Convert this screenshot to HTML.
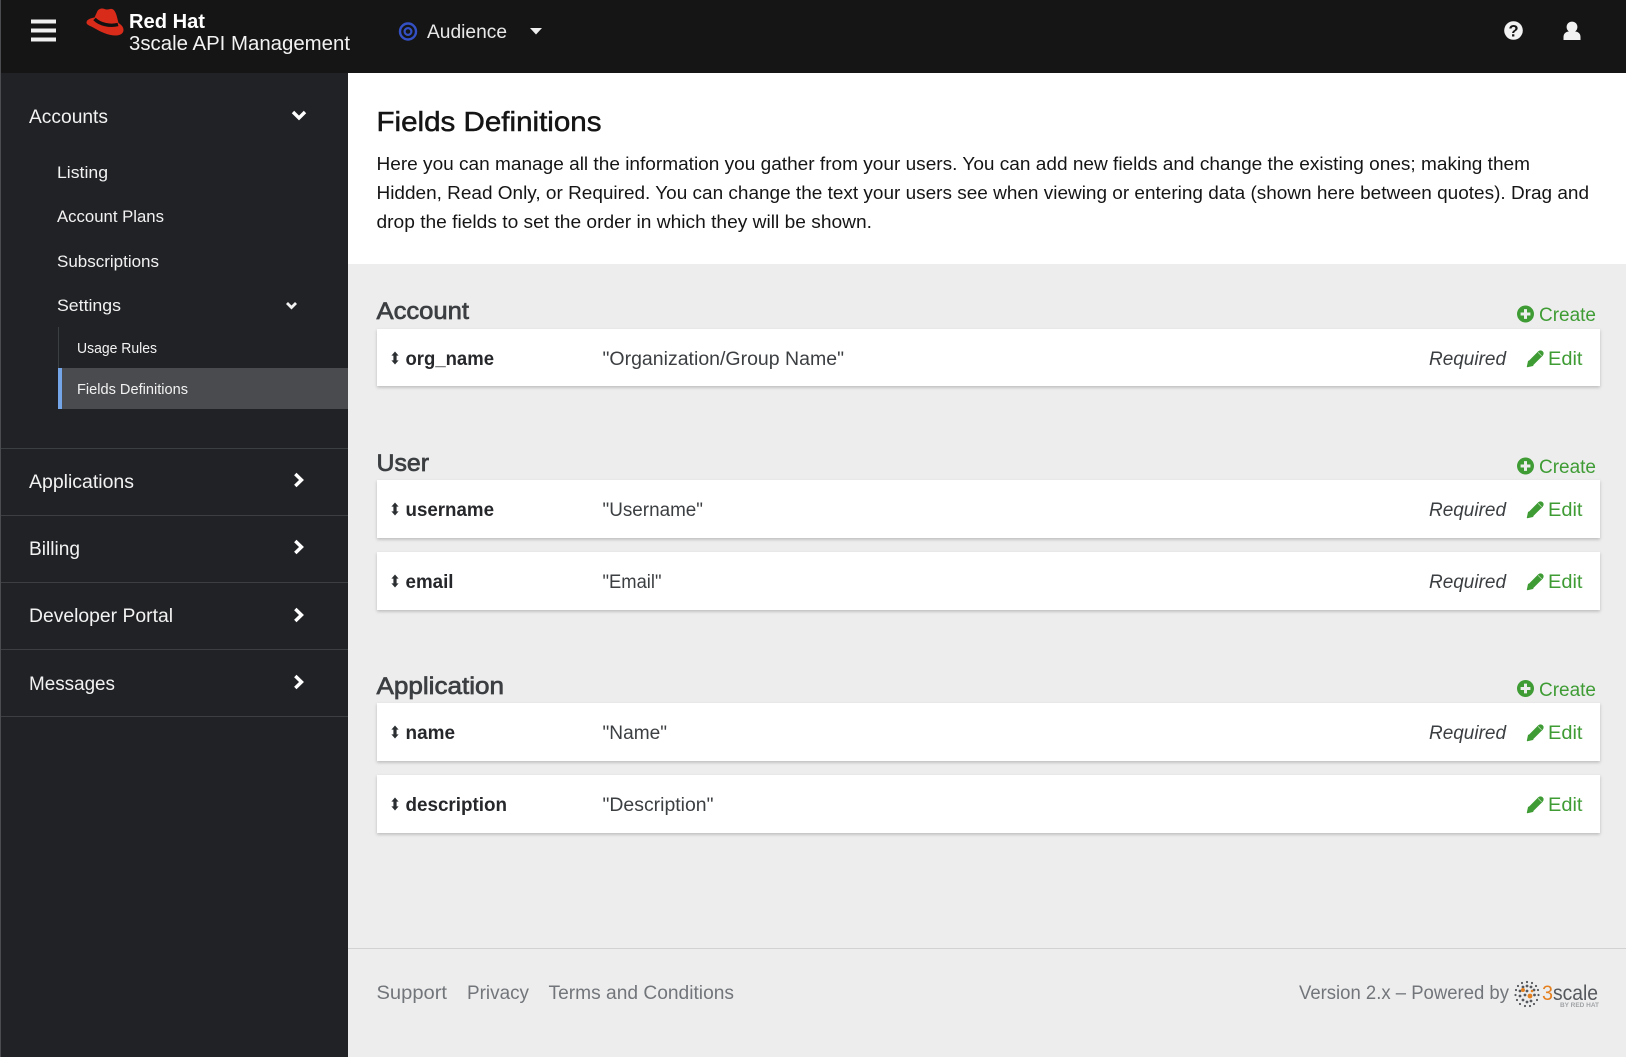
<!DOCTYPE html>
<html lang="en"><head><meta charset="utf-8"><title>Fields Definitions</title>
<style>
html,body{margin:0;padding:0;width:1626px;height:1057px;overflow:hidden;background:#ededed}
svg{display:block}
text{font-family:"Liberation Sans",sans-serif}
.side{fill:#f2f2f2}
.g{fill:#3f9c35;font-size:19px}
.fn{fill:#25272a;font-size:19px;font-weight:700}
.lb{fill:#3c3f42;font-size:19px}
.rq{fill:#3c3f42;font-size:19px;font-style:italic}
.sec{fill:#3c3f42;font-size:24px;stroke:#3c3f42;stroke-width:.7px}
.p{fill:#151515;font-size:18.6px}
.ft{fill:#72767b;font-size:19px}
</style></head>
<body>
<svg xmlns="http://www.w3.org/2000/svg" xmlns:xlink="http://www.w3.org/1999/xlink" width="1626" height="1057" viewBox="0 0 1626 1057" shape-rendering="geometricPrecision">
<defs>
<filter id="s" x="-1%" y="-10%" width="102%" height="125%"><feDropShadow dx="0" dy="1.5" stdDeviation="1.5" flood-color="#000" flood-opacity=".22"/></filter>
<g id="h"><path d="M0-6.500 3.600-2.400H1.600V2.400H3.600L0 6.500-3.600 2.400H-1.600V-2.400H-3.600Z" fill="#2c2f32"/></g>
<g id="pen"><path d="M4.800 13.200 14 4" fill="none" stroke="#3f9c35" stroke-width="6.200" stroke-linecap="round"/><path d="M.8 17.200 2 11.600 6.400 16Z" fill="#3f9c35" stroke="#3f9c35" stroke-width="1" stroke-linejoin="round"/><path d="M11.600 2.900 15.100 6.400" stroke="#fff" stroke-width=".7" opacity=".7"/></g>
<g id="plus"><circle cx="8.500" cy="8.500" r="8.500" fill="#3f9c35"/><path d="M7 3.600H10V7H13.400V10H10V13.400H7V10H3.600V7H7Z" fill="#ededed"/></g>
<g id="ch"><path d="M-3.200-6 3 0-3.200 6" fill="none" stroke="#fff" stroke-width="3.400"/></g>
</defs>

<!-- page -->
<rect width="1626" height="1057" fill="#ededed"/>
<rect x="348" y="73" width="1278" height="191" fill="#fff"/>
<rect x="348" y="948" width="1278" height="1" fill="#d2d2d2"/>

<!-- sidebar -->
<rect x="0" y="73" width="348" height="984" fill="#212226"/>
<rect x="0" y="0" width="1" height="1057" fill="#4a4c50"/>
<rect x="58" y="327" width="1" height="41" fill="#3c3f42"/>
<rect x="58" y="368" width="290" height="41" fill="#4a4b4f"/>
<rect x="58" y="368" width="4" height="41" fill="#73a5e8"/>
<g fill="#3c3f42">
<rect x="1" y="448" width="347" height="1"/><rect x="1" y="515" width="347" height="1"/><rect x="1" y="582" width="347" height="1"/><rect x="1" y="649" width="347" height="1"/><rect x="1" y="716" width="347" height="1"/>
</g>
<g class="side">
<text x="29" y="123" font-size="19" textLength="79" lengthAdjust="spacingAndGlyphs">Accounts</text>
<text x="57" y="178" font-size="17" textLength="51" lengthAdjust="spacingAndGlyphs">Listing</text>
<text x="57" y="222" font-size="17" textLength="107" lengthAdjust="spacingAndGlyphs">Account Plans</text>
<text x="57" y="267" font-size="17" textLength="102" lengthAdjust="spacingAndGlyphs">Subscriptions</text>
<text x="57" y="311" font-size="17" textLength="64" lengthAdjust="spacingAndGlyphs">Settings</text>
<text x="77" y="353" font-size="15" textLength="80" lengthAdjust="spacingAndGlyphs">Usage Rules</text>
<text x="77" y="394" font-size="15" textLength="111" lengthAdjust="spacingAndGlyphs">Fields Definitions</text>
<text x="29" y="488" font-size="19" textLength="105" lengthAdjust="spacingAndGlyphs">Applications</text>
<text x="29" y="555" font-size="19" textLength="51" lengthAdjust="spacingAndGlyphs">Billing</text>
<text x="29" y="622" font-size="19" textLength="144" lengthAdjust="spacingAndGlyphs">Developer Portal</text>
<text x="29" y="690" font-size="19" textLength="86" lengthAdjust="spacingAndGlyphs">Messages</text>
</g>
<path d="M293 112 299 118 305 112" fill="none" stroke="#fff" stroke-width="3.400"/>
<path d="M287 303 291.500 307.500 296 303" fill="none" stroke="#f2f2f2" stroke-width="2.800"/>
<use xlink:href="#ch" href="#ch" x="298.500" y="480"/>
<use xlink:href="#ch" href="#ch" x="298.500" y="547"/>
<use xlink:href="#ch" href="#ch" x="298.500" y="615"/>
<use xlink:href="#ch" href="#ch" x="298.500" y="682"/>

<!-- header -->
<rect x="1" y="0" width="1625" height="73" fill="#151515"/>
<g fill="#f0f0f0"><rect x="31" y="19.500" width="25" height="4"/><rect x="31" y="28.500" width="25" height="4"/><rect x="31" y="37.500" width="25" height="4"/></g>
<path d="M97 12C98 9.500 100 8.500 102 8.500 104 8.500 105 9.500 107 9.500 109 9.500 110 8.500 112 9 114.500 9.500 116 13 117 17L118.500 23C121.500 25 123.500 27 123.500 30 123.500 33.500 120 35.500 116 35.500 108 35.500 100 31.500 95 28.500 90 25.500 86.500 25 86.500 22.500 86.500 19.500 91 18 94.500 17.500Z" fill="#d92b1a"/>
<path d="M94.500 19C100 24.500 110 26.500 118 24.500" fill="none" stroke="#111" stroke-width="3.400"/>
<text x="129" y="28" font-size="20" font-weight="700" fill="#fff" textLength="76" lengthAdjust="spacingAndGlyphs">Red Hat</text>
<text x="129" y="50" font-size="20.500" fill="#f2f2f2" textLength="221" lengthAdjust="spacingAndGlyphs">3scale API Management</text>
<circle cx="408" cy="31.500" r="8" fill="none" stroke="#3350c4" stroke-width="2.400"/>
<circle cx="408" cy="31.500" r="3.400" fill="none" stroke="#3350c4" stroke-width="2.200"/>
<text x="427" y="38" font-size="19" fill="#e8e8e8" textLength="80" lengthAdjust="spacingAndGlyphs">Audience</text>
<path d="M530 28H542L536 34.500Z" fill="#eee"/>
<circle cx="1513.500" cy="30.500" r="9.300" fill="#f2f2f2"/>
<text x="1513.500" y="36.500" font-size="16.500" font-weight="700" fill="#151515" text-anchor="middle">?</text>
<circle cx="1572" cy="27" r="5.400" fill="#f2f2f2"/>
<path d="M1563.500 40V37C1563.500 33.500 1566 31.500 1569 31.500H1575C1578 31.500 1580.500 33.500 1580.500 37V40Z" fill="#f2f2f2"/>

<!-- intro -->
<text x="376.500" y="131" font-size="27.500" fill="#151515" stroke="#151515" stroke-width=".5" textLength="225" lengthAdjust="spacingAndGlyphs">Fields Definitions</text>
<text class="p" x="376.500" y="170" textLength="1153.500" lengthAdjust="spacingAndGlyphs">Here you can manage all the information you gather from your users. You can add new fields and change the existing ones; making them</text>
<text class="p" x="376.500" y="199" textLength="1212.500" lengthAdjust="spacingAndGlyphs">Hidden, Read Only, or Required. You can change the text your users see when viewing or entering data (shown here between quotes). Drag and</text>
<text class="p" x="376.500" y="228" textLength="495.500" lengthAdjust="spacingAndGlyphs">drop the fields to set the order in which they will be shown.</text>

<!-- rows -->
<g fill="#fff" filter="url(#s)">
<rect x="377" y="329" width="1223" height="57"/>
<rect x="377" y="480" width="1223" height="58"/>
<rect x="377" y="552" width="1223" height="58"/>
<rect x="377" y="703" width="1223" height="58"/>
<rect x="377" y="775" width="1223" height="58"/>
</g>

<!-- Account -->
<text class="sec" x="376.500" y="319" textLength="92.500" lengthAdjust="spacingAndGlyphs">Account</text>
<use xlink:href="#plus" href="#plus" x="1517" y="305.500"/>
<text class="g" x="1539" y="321" textLength="57" lengthAdjust="spacingAndGlyphs">Create</text>
<use xlink:href="#h" href="#h" x="395" y="358"/>
<text class="fn" x="405.500" y="365" textLength="88.500" lengthAdjust="spacingAndGlyphs">org_name</text>
<text class="lb" x="602.500" y="365" textLength="241.500" lengthAdjust="spacingAndGlyphs">"Organization/Group Name"</text>
<text class="rq" x="1429" y="365" textLength="77" lengthAdjust="spacingAndGlyphs">Required</text>
<use xlink:href="#pen" href="#pen" x="1526.500" y="349.500"/>
<text class="g" x="1548" y="365" textLength="34.500" lengthAdjust="spacingAndGlyphs">Edit</text>

<!-- User -->
<text class="sec" x="376.500" y="471" textLength="52.500" lengthAdjust="spacingAndGlyphs">User</text>
<use xlink:href="#plus" href="#plus" x="1517" y="457.500"/>
<text class="g" x="1539" y="473" textLength="57" lengthAdjust="spacingAndGlyphs">Create</text>
<use xlink:href="#h" href="#h" x="395" y="509"/>
<text class="fn" x="405.500" y="516" textLength="88.500" lengthAdjust="spacingAndGlyphs">username</text>
<text class="lb" x="602.500" y="516" textLength="100.500" lengthAdjust="spacingAndGlyphs">"Username"</text>
<text class="rq" x="1429" y="516" textLength="77" lengthAdjust="spacingAndGlyphs">Required</text>
<use xlink:href="#pen" href="#pen" x="1526.500" y="500.500"/>
<text class="g" x="1548" y="516" textLength="34.500" lengthAdjust="spacingAndGlyphs">Edit</text>

<use xlink:href="#h" href="#h" x="395" y="581"/>
<text class="fn" x="405.500" y="588" textLength="48" lengthAdjust="spacingAndGlyphs">email</text>
<text class="lb" x="602.500" y="588" textLength="59" lengthAdjust="spacingAndGlyphs">"Email"</text>
<text class="rq" x="1429" y="588" textLength="77" lengthAdjust="spacingAndGlyphs">Required</text>
<use xlink:href="#pen" href="#pen" x="1526.500" y="572.500"/>
<text class="g" x="1548" y="588" textLength="34.500" lengthAdjust="spacingAndGlyphs">Edit</text>

<!-- Application -->
<text class="sec" x="376.500" y="694" textLength="127.500" lengthAdjust="spacingAndGlyphs">Application</text>
<use xlink:href="#plus" href="#plus" x="1517" y="680"/>
<text class="g" x="1539" y="696" textLength="57" lengthAdjust="spacingAndGlyphs">Create</text>
<use xlink:href="#h" href="#h" x="395" y="732"/>
<text class="fn" x="405.500" y="739" textLength="49.500" lengthAdjust="spacingAndGlyphs">name</text>
<text class="lb" x="602.500" y="739" textLength="64.500" lengthAdjust="spacingAndGlyphs">"Name"</text>
<text class="rq" x="1429" y="739" textLength="77" lengthAdjust="spacingAndGlyphs">Required</text>
<use xlink:href="#pen" href="#pen" x="1526.500" y="723.500"/>
<text class="g" x="1548" y="739" textLength="34.500" lengthAdjust="spacingAndGlyphs">Edit</text>

<use xlink:href="#h" href="#h" x="395" y="804"/>
<text class="fn" x="405.500" y="811" textLength="101.500" lengthAdjust="spacingAndGlyphs">description</text>
<text class="lb" x="602.500" y="811" textLength="111" lengthAdjust="spacingAndGlyphs">"Description"</text>
<use xlink:href="#pen" href="#pen" x="1526.500" y="795.500"/>
<text class="g" x="1548" y="811" textLength="34.500" lengthAdjust="spacingAndGlyphs">Edit</text>

<!-- footer -->
<text class="ft" x="376.500" y="999" textLength="70.500" lengthAdjust="spacingAndGlyphs">Support</text>
<text class="ft" x="467" y="999" textLength="62" lengthAdjust="spacingAndGlyphs">Privacy</text>
<text class="ft" x="548.500" y="999" textLength="185.500" lengthAdjust="spacingAndGlyphs">Terms and Conditions</text>
<text class="ft" x="1299" y="999" textLength="210" lengthAdjust="spacingAndGlyphs">Version 2.x – Powered by</text>
<g fill="#55585c">
<circle cx="1527" cy="982" r="1.100"/><circle cx="1522" cy="983" r="1.100"/><circle cx="1532" cy="983" r="1.100"/><circle cx="1518" cy="986" r="1.100"/><circle cx="1536" cy="986" r="1.100"/><circle cx="1516" cy="990" r="1.100"/><circle cx="1538" cy="990" r="1.100"/><circle cx="1515.500" cy="995" r="1.100"/><circle cx="1538.500" cy="995" r="1.100"/><circle cx="1517" cy="1000" r="1.100"/><circle cx="1537" cy="1000" r="1.100"/><circle cx="1520" cy="1004" r="1.100"/><circle cx="1534" cy="1004" r="1.100"/><circle cx="1525" cy="1006" r="1.100"/><circle cx="1530" cy="1006" r="1.100"/>
<circle cx="1527" cy="986" r="1.400"/><circle cx="1523" cy="987" r="1.400"/><circle cx="1531" cy="987" r="1.400"/><circle cx="1520" cy="991" r="1.400"/><circle cx="1534" cy="990" r="1.400"/><circle cx="1520" cy="996" r="1.400"/><circle cx="1534.500" cy="995" r="1.400"/><circle cx="1523" cy="1000" r="1.400"/><circle cx="1527" cy="1002" r="1.400"/><circle cx="1531" cy="1001" r="1.400"/><circle cx="1525" cy="995" r="1.400"/><circle cx="1527" cy="991" r="1.400"/>
</g>
<g fill="#e5801f"><circle cx="1523" cy="990" r="2"/><circle cx="1530" cy="996" r="2.400"/><circle cx="1532" cy="991" r="1.300"/></g>
<text x="1542" y="1000" font-size="21" fill="#e5801f" textLength="11" lengthAdjust="spacingAndGlyphs">3</text>
<text x="1553" y="1000" font-size="21" fill="#55585c" textLength="45" lengthAdjust="spacingAndGlyphs">scale</text>
<text x="1560" y="1007" font-size="6.500" fill="#a0a3a6" font-weight="700" textLength="39" lengthAdjust="spacingAndGlyphs">BY RED HAT</text>
</svg>
</body></html>
